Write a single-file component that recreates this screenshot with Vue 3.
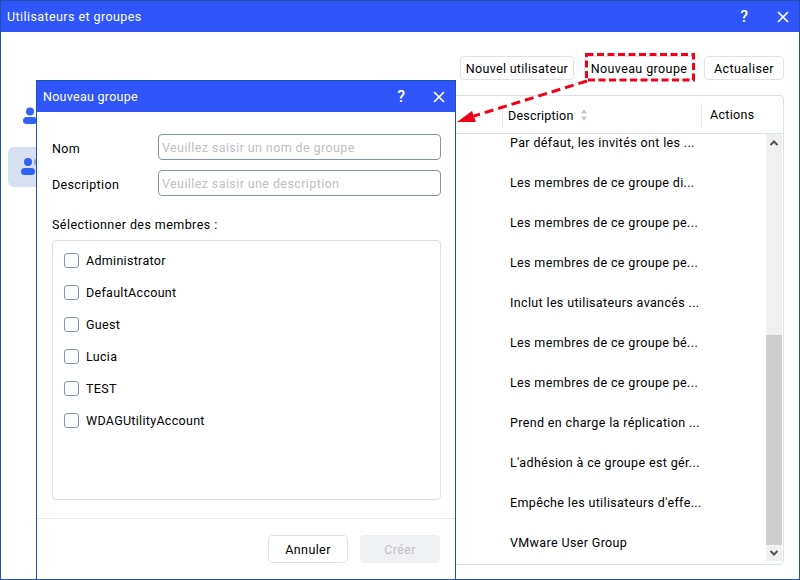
<script setup>
const rows = [
  'Par défaut, les invités ont les ...',
  'Les membres de ce groupe di...',
  'Les membres de ce groupe pe...',
  'Les membres de ce groupe pe...',
  'Inclut les utilisateurs avancés ...',
  'Les membres de ce groupe bé...',
  'Les membres de ce groupe pe...',
  'Prend en charge la réplication ...',
  "L'adhésion à ce groupe est gér...",
  "Empêche les utilisateurs d'effe...",
  'VMware User Group'
]
const members = ['Administrator', 'DefaultAccount', 'Guest', 'Lucia', 'TEST', 'WDAGUtilityAccount']
</script>

<template>
  <div class="window">
    <header class="titlebar">
      <span class="title">Utilisateurs et groupes</span>
      <div class="winbtns">
        <span class="help">?</span>
        <svg class="close" width="14" height="14" viewBox="0 0 14 14"><path d="M2 2l10 10M12 2L2 12" stroke="#fff" stroke-width="1.7" fill="none"/></svg>
      </div>
    </header>
    <div class="content">
      <aside class="sidebar">
        <div class="side-item first">
          <svg width="22" height="20" viewBox="0 0 22 20"><circle cx="11" cy="6.5" r="4" fill="#2f62f5"/><rect x="4" y="12" width="14" height="7" rx="3.5" fill="#2f62f5"/></svg>
        </div>
        <div class="side-item active">
          <svg width="30" height="20" viewBox="0 0 30 20"><circle cx="21" cy="5" r="4" fill="#8fa6de"/><circle cx="11" cy="5" r="4" fill="#2f62f5"/><rect x="4" y="11" width="14" height="7" rx="3.5" fill="#2f62f5"/></svg>
        </div>
      </aside>
      <section class="main">
        <div class="toolbar">
          <button class="btn b1">Nouvel utilisateur</button>
          <button class="btn b2">Nouveau groupe</button>
          <button class="btn b3">Actualiser</button>
        </div>
        <div class="table">
          <div class="thead">
            <div class="th name"></div>
            <div class="th desc">
              Description
              <svg width="8" height="14" viewBox="0 0 8 14"><path d="M4 1l3 4.5H1z" fill="#c4c8cf"/><path d="M4 13l3-4.5H1z" fill="#c4c8cf"/></svg>
            </div>
            <div class="th actions">Actions</div>
          </div>
          <div class="tbody">
            <div class="rows">
              <div v-for="r in rows" :key="r" class="row"><span class="cell">{{ r }}</span></div>
            </div>
            <div class="scrollbar">
              <svg class="arrow" width="16" height="18" viewBox="0 0 16 18"><path d="M4.5 11L8 7.5l3.5 3.5" stroke="#555" stroke-width="2" fill="none"/></svg>
              <div class="track"><div class="thumb"></div></div>
              <svg class="arrow" width="16" height="16" viewBox="0 0 16 16"><path d="M4.5 6L8 9.5 11.5 6" stroke="#555" stroke-width="2" fill="none"/></svg>
            </div>
          </div>
        </div>
      </section>
    </div>

    <div class="dialog">
      <header class="dlg-title">
        <span class="title dlg-name">Nouveau groupe</span>
        <div class="dlgbtns">
          <span class="help">?</span>
          <svg width="14" height="14" viewBox="0 0 14 14"><path d="M2 2l10 10M12 2L2 12" stroke="#fff" stroke-width="1.7" fill="none"/></svg>
        </div>
      </header>
      <div class="dlg-body">
        <label class="field"><span class="lbl">Nom</span><input class="input" placeholder="Veuillez saisir un nom de groupe"></label>
        <label class="field"><span class="lbl">Description</span><input class="input" placeholder="Veuillez saisir une description"></label>
        <div class="sel-title">Sélectionner des membres :</div>
        <div class="members">
          <div v-for="m in members" :key="m" class="member"><span class="check"></span>{{ m }}</div>
        </div>
      </div>
      <footer class="dlg-foot">
        <button class="fbtn">Annuler</button>
        <button class="fbtn disabled">Créer</button>
      </footer>
    </div>

    <svg class="annot" width="800" height="580" viewBox="0 0 800 580">
      <rect x="586.5" y="54.5" width="107" height="25.5" fill="none" stroke="#f2001a" stroke-width="3" stroke-dasharray="7 3.5"/>
      <path d="M587 81L474 116" stroke="#f2001a" stroke-width="3" stroke-dasharray="9 5" fill="none"/>
      <path d="M457 122L472 111L476 122Z" fill="#f2001a"/>
    </svg>
  </div>
</template>

<style>
html, body { margin: 0; padding: 0; background: #fff; }
</style>

<style scoped>
.window {
  position: relative;
  width: 800px;
  height: 580px;
  box-sizing: border-box;
  border: 1px solid #1d55a8;
  overflow: hidden;
  background: #fff;
  font-family: Roboto, "Liberation Sans", sans-serif;
  font-size: 12.5px;
  letter-spacing: 0.3px;
  color: #000;
}
.titlebar {
  height: 31px;
  background: #3056fb;
  color: #fff;
  display: flex;
  align-items: center;
  justify-content: space-between;
  padding: 0 9px 0 6px;
}
.title { font-size: 12.5px; letter-spacing: 0.42px; }
.dlg-name { letter-spacing: 0.27px; }
.winbtns { display: flex; align-items: center; gap: 28px; }
.help { font-size: 16px; font-weight: 500; color: #fff; letter-spacing: 0; }
.content { display: flex; height: 548px; }
.sidebar {
  width: 100px;
  padding: 63px 8px 0 7px;
  box-sizing: border-box;
  display: flex;
  flex-direction: column;
  gap: 12px;
}
.side-item {
  height: 40px;
  border-radius: 6px;
  display: flex;
  align-items: center;
  padding-left: 9px;
}
.side-item.first { padding-left: 11px; }
.side-item.active { background: #d6e0f0; }
.main { flex: 1; display: flex; flex-direction: column; padding-right: 15px; min-width: 0; }
.toolbar {
  display: flex;
  justify-content: flex-end;
  gap: 10px;
  padding-top: 24px;
  height: 63px;
  box-sizing: border-box;
}
.btn {
  height: 24px;
  padding: 0;
  background: #fff;
  border: 1px solid #dde4ef;
  border-radius: 4px;
  font: inherit;
  letter-spacing: inherit;
  color: #000;
}
.b1 { width: 114px; }
.b2 { width: 110px; letter-spacing: 0.4px; }
.b3 { width: 80px; letter-spacing: 0.4px; }
.table {
  height: 470px;
  box-sizing: border-box;
  border: 1px solid #d6e3f3;
  border-radius: 4px;
  display: flex;
  flex-direction: column;
  overflow: hidden;
}
.thead {
  height: 38px;
  flex: none;
  display: flex;
  align-items: center;
  border-bottom: 1px solid #d6e3f3;
  box-sizing: border-box;
}
.th { height: 24px; display: flex; align-items: center; box-sizing: border-box; }
.name { width: 400px; }
.desc { width: 200px; padding: 1px 0 0 5px; gap: 7px; letter-spacing: 0.2px; border-left: 1px solid #e4e8ef; border-right: 1px solid #e4e8ef; }
.actions { padding-left: 8px; }
.tbody { flex: 1; display: flex; overflow: hidden; min-height: 0; padding-right: 1px; }
.rows { flex: 1; margin-top: -12px; padding-left: 408px; min-width: 0; letter-spacing: 0.36px; }
.row { height: 40px; display: flex; align-items: center; }
.cell { white-space: nowrap; }
.scrollbar {
  width: 16px;
  flex: none;
  display: flex;
  flex-direction: column;
  height: 427px;
  background: #f0f0f0;
}
.arrow { flex: none; display: block; }
.track { flex: 1; display: flex; flex-direction: column; justify-content: flex-end; }
.thumb { height: 210px; background: #cdcdcd; }

.dialog {
  position: absolute;
  left: 35px;
  top: 79px;
  width: 420px;
  height: 510px;
  box-sizing: border-box;
  background: #fff;
  border: 1px solid #1d55a8;
  display: flex;
  flex-direction: column;
}
.dlg-title {
  height: 31px;
  flex: none;
  background: #3056fb;
  color: #fff;
  display: flex;
  align-items: center;
  justify-content: space-between;
  padding: 0 9px 0 6px;
}
.dlgbtns { display: flex; align-items: center; gap: 27px; }
.dlg-body { padding: 22px 14px 0 15px; flex: none; height: 407px; box-sizing: border-box; border-bottom: 1px solid #e4e9f2; }
.field { display: flex; align-items: center; height: 26px; margin-bottom: 10px; }
.lbl { width: 106px; flex: none; padding-top: 2px; letter-spacing: 0.35px; }
.input {
  flex: 1;
  min-width: 0;
  height: 26px;
  box-sizing: border-box;
  border: 1px solid #8494a9;
  border-radius: 4px;
  padding: 1px 3px 0;
  font: inherit;
  letter-spacing: 0.4px;
  color: #000;
  outline: none;
}
.input::placeholder { color: #c0c0c4; opacity: 1; }
.sel-title { margin-top: 21px; height: 16px; line-height: 16px; letter-spacing: 0.43px; }
.members {
  margin-top: 7px;
  height: 260px;
  box-sizing: border-box;
  border: 1px solid #d6e3f3;
  border-radius: 4px;
  padding: 3px 11px;
}
.member { height: 32px; display: flex; align-items: center; gap: 7px; }
.check {
  width: 15px;
  height: 15px;
  box-sizing: border-box;
  border: 1px solid #8494a9;
  border-radius: 3px;
  flex: none;
}
.dlg-foot { display: flex; justify-content: flex-end; gap: 12px; padding: 16px 15px 0 0; }
.fbtn {
  width: 80px;
  height: 28px;
  background: #fff;
  border: 1px solid #dde4ef;
  border-radius: 4px;
  font: inherit;
  letter-spacing: 0.4px;
  color: #000;
}
.fbtn.disabled { background: #f0f1f5; border-color: #f0f1f5; color: #c0c0c6; }
.annot { position: absolute; left: -1px; top: -1px; pointer-events: none; }
</style>
